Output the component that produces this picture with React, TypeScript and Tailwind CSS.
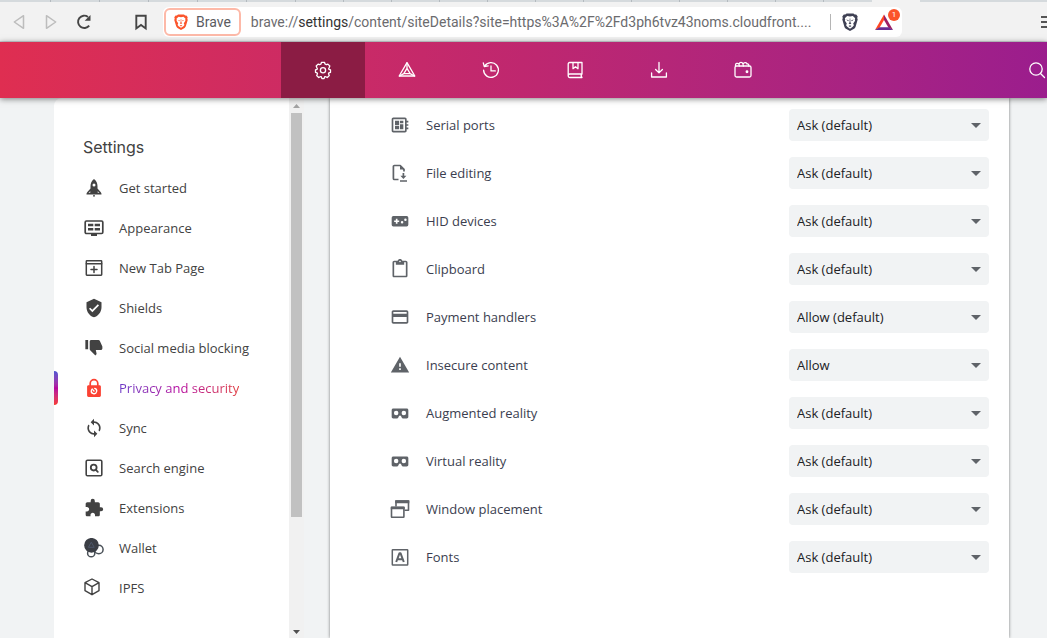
import React, { ReactNode } from "react";
import {
  MdContentPaste,
  MdDeveloperBoard,
  MdExtension,
  MdPayment,
  MdSync,
  MdVerifiedUser,
  MdWarning,
} from "react-icons/md";

type IconProps = { children: ReactNode; className?: string };

function Solid({ children, className = "size-5" }: IconProps) {
  return (
    <svg viewBox="0 0 24 24" className={className} fill="currentColor" aria-hidden="true">
      {children}
    </svg>
  );
}

function Line({ children, className = "size-5" }: IconProps) {
  return (
    <svg
      viewBox="0 0 20 20"
      className={className}
      fill="none"
      stroke="currentColor"
      strokeWidth="1.5"
      strokeLinejoin="round"
      strokeLinecap="round"
      aria-hidden="true"
    >
      {children}
    </svg>
  );
}

function Lion({ className }: { className: string }) {
  return (
    <svg viewBox="0 0 16 18" className={className} aria-hidden="true">
      <path
        fill="currentColor"
        d="M4.600.4h6.800l1.300 1.200 1.500-.1 1.500 2.100-.5 1.400.5 1.600-2.100 7.100c-.3 1-.8 1.600-1.500 2.100L8 18l-4.100-2.200c-.7-.5-1.200-1.100-1.500-2.100L.3 6.600.8 5 .3 3.600l1.500-2.100 1.500.1Z"
      />
      <path
        fill="white"
        d="M5.200 3 8 3.500 10.800 3l2.400 2.300-.4 1 .3 1.400-1.900 2.800.7 1.800-1.200 1.500L8 15.700l-2.700-1.900-1.200-1.500.7-1.800-1.900-2.800.3-1.400-.4-1Z"
      />
      <path
        fill="currentColor"
        d="m4.200 6.600 2.600.6-.6 1ZM11.800 6.600l-2.600.6.6 1ZM7.700 5.500h.6l.1 3.700 1 1.200L8 11.300l-1.400-.9 1-1.200ZM6.500 13 8 12.300l1.500.7L8 14Z"
      />
    </svg>
  );
}

const rocket = (
  <Line>
    <path
      fill="currentColor"
      stroke="none"
      fillRule="evenodd"
      d="M10 1C7.500 3 6.500 5.500 6.500 8.200v2.400L3.400 14c-.8.9-.9 1.500-.9 2.500h15c0-1-.1-1.600-.9-2.500l-3.100-3.400V8.200C13.500 5.500 12.500 3 10 1Zm0 4.600a1.500 1.500 0 1 1 0 3 1.500 1.500 0 0 1 0-3ZM6.300 13.200v1.600H4.500ZM13.700 13.200v1.600h1.800Z"
    />
    <path fill="currentColor" stroke="none" d="M9.200 17h1.600l-.2 1.700h-1.200Z" />
  </Line>
);

const appearance = (
  <Line>
    <rect x="1.200" y="3" width="17.600" height="12.500" rx="1.200" strokeWidth="1.700" />
    <path
      fill="currentColor"
      stroke="none"
      d="M7 16h6v2H7zM4 5.800h5.300v2.500H4zM10.700 5.800H16v2.500h-5.300zM4 10h5.300v2.500H4zM10.700 10H16v2.500h-5.300z"
    />
  </Line>
);

const newTab = (
  <Line>
    <rect x="2.300" y="2.800" width="15.400" height="14.400" rx=".6" />
    <path d="M2.300 5.800h15.400M10 8.500v6M7 11.500h6" />
  </Line>
);

const thumbDown = (
  <Solid>
    <path
      transform="translate(23 0) scale(-0.95 0.93)"
      d="M15 2.500H6c-.83 0-1.540.5-1.840 1.220L1.140 10.770c-.09.23-.14.47-.14.73v2c0 1.100.9 2 2 2h6.310l-.95 4.570-.03.320c0 .41.17.79.44 1.060l1.060 1.050 6.590-6.590c.36-.36.58-.86.58-1.410V4.500c0-1.100-.9-2-2-2zm4 0v12h3.500v-12H19z"
    />
  </Solid>
);

const lock = (
  <Line className="size-5 text-[#fb4233]">
    <path d="M6.200 8V5.500a3.800 3.800 0 0 1 7.600 0V8" strokeWidth="1.700" />
    <path
      fill="currentColor"
      stroke="none"
      d="M4.500 7.300h11c.8 0 1.400.6 1.400 1.400v8.900c0 .8-.6 1.400-1.400 1.400h-11c-.8 0-1.400-.6-1.400-1.400V8.700c0-.8.6-1.400 1.400-1.400Z"
    />
    <circle cx="10" cy="13" r="2.700" stroke="white" strokeWidth="1.300" strokeDasharray="14 3" transform="rotate(-75 10 13)" />
    <path d="m10 13-1.300-1.400" stroke="white" strokeWidth="1.300" />
  </Line>
);

const searchEngine = (
  <Line>
    <rect x="2.200" y="2.200" width="15.600" height="15.600" rx="1.300" strokeWidth="1.600" />
    <circle cx="9.700" cy="9.600" r="2.900" strokeWidth="1.800" />
    <path d="m11.900 11.900 1.900 1.900" strokeWidth="1.800" />
  </Line>
);

const walletTokens = (
  <Line>
    <circle cx="14.800" cy="11.500" r="4.300" stroke="#495057" />
    <circle cx="7.200" cy="15.200" r="3.600" stroke="#495057" />
    <circle cx="7.500" cy="7.300" r="6.600" fill="#3b3e45" stroke="#3b3e45" />
    <path d="m7.500 4.500 2.700 4.800H4.800Z" stroke="#4d5669" strokeWidth="1" />
  </Line>
);

const cube = (
  <Line>
    <path d="m8 1 7 3.700v8l-7 4-7-4v-8zM1 4.700l7 4 7-4M8 8.700v8" strokeWidth="1.400" />
  </Line>
);

const navigation: { label: string; icon: ReactNode; active?: boolean }[] = [
  { label: "Get started", icon: rocket },
  { label: "Appearance", icon: appearance },
  { label: "New Tab Page", icon: newTab },
  { label: "Shields", icon: <MdVerifiedUser className="size-5" /> },
  { label: "Social media blocking", icon: thumbDown },
  { label: "Privacy and security", icon: lock, active: true },
  { label: "Sync", icon: <MdSync className="size-5" /> },
  { label: "Search engine", icon: searchEngine },
  { label: "Extensions", icon: <MdExtension className="size-5" /> },
  { label: "Wallet", icon: walletTokens },
  { label: "IPFS", icon: cube },
];

const fileEditing = (
  <Line>
    <path d="M8.500 16.500H4.400a1 1 0 0 1-1-1v-12a1 1 0 0 1 1-1h5.800L14 6.300v2.200" strokeWidth="1.700" strokeLinecap="butt" />
    <path d="M10 2.500v4h4z" fill="currentColor" stroke="none" />
    <path d="M13.400 10v3" strokeWidth="1.700" strokeLinecap="butt" />
    <path d="M10.400 12.800h6l-3 3.200zM10 17.200h7v1.500h-7z" fill="currentColor" stroke="none" />
  </Line>
);

const hid = (
  <Solid>
    <path
      fillRule="evenodd"
      d="M4 6h16a2 2 0 0 1 2 2v8.500a2 2 0 0 1-2 2H4a2 2 0 0 1-2-2V8a2 2 0 0 1 2-2Zm3 3.300v2H5v2h2v2h2v-2h2v-2H9v-2Zm7.500 2.700a1.500 1.500 0 1 0 0 3 1.500 1.500 0 0 0 0-3Zm4-3a1.500 1.500 0 1 0 0 3 1.500 1.500 0 0 0 0-3Z"
    />
  </Solid>
);

const goggles = (
  <Solid>
    <path
      fillRule="evenodd"
      d="M4 6.500h16c1.200 0 2 .8 2 2v8c0 1.200-.8 2-2 2h-4.300c-.8 0-1.400-.4-1.700-1.100l-.8-1.700c-.5-1-1.900-1-2.400 0l-.8 1.700c-.3.7-.9 1.100-1.700 1.100H4c-1.200 0-2-.8-2-2v-8c0-1.200.8-2 2-2Zm3.400 2.700a2.700 2.700 0 1 0 0 5.400 2.700 2.700 0 0 0 0-5.400Zm9.200 0a2.700 2.700 0 1 0 0 5.400 2.700 2.700 0 0 0 0-5.400Z"
    />
  </Solid>
);

const windows = (
  <Line>
    <path d="M6 7V2h12.500v9.300H15" strokeWidth="1.600" />
    <path d="M5.200 1.200h14.100v3H5.200zM.8 7.700h13.900v2.500H.8z" fill="currentColor" stroke="none" />
    <rect x="1.500" y="8.400" width="12.400" height="9.800" rx=".4" strokeWidth="1.600" />
  </Line>
);

const fonts = (
  <Line>
    <rect x="2.300" y="2.800" width="15.400" height="15.200" rx=".5" />
    <path d="M6.200 15 9.500 6.200h1L13.800 15M7.600 12.200h4.800" strokeWidth="2" strokeLinecap="butt" />
  </Line>
);

const permissions: { label: string; icon: ReactNode; value: string }[] = [
  { label: "Serial ports", icon: <MdDeveloperBoard className="size-5" />, value: "Ask (default)" },
  { label: "File editing", icon: fileEditing, value: "Ask (default)" },
  { label: "HID devices", icon: hid, value: "Ask (default)" },
  { label: "Clipboard", icon: <MdContentPaste className="size-5" />, value: "Ask (default)" },
  { label: "Payment handlers", icon: <MdPayment className="size-5" />, value: "Allow (default)" },
  { label: "Insecure content", icon: <MdWarning className="size-5" />, value: "Allow" },
  { label: "Augmented reality", icon: goggles, value: "Ask (default)" },
  { label: "Virtual reality", icon: goggles, value: "Ask (default)" },
  { label: "Window placement", icon: windows, value: "Ask (default)" },
  { label: "Fonts", icon: fonts, value: "Ask (default)" },
];

const sections: { label: string; icon: ReactNode; active?: boolean }[] = [
  {
    label: "Settings",
    active: true,
    icon: (
      <>
        <path d="M8.100 3.900 8.400 2.400h3.200l.3 1.500 1.500.8 1.500-.6 1.900 1.900-.7 1.800c-.6.9-.6 1.200 0 1.500l1.400.5v2.500l-1.500.5c-.6.4-.6 1-.2 1.600l.5 1.200-2 1.900-1.400-.7c-.8-.4-1.300-.1-1.500.6l-.3 1.200H8.900l-.3-1.200c-.2-.7-.7-1-1.500-.6l-1.400.7-2-1.900.5-1.200c.4-.6.4-1.200-.2-1.600l-1.500-.5V9.800l1.400-.5c.6-.3.600-.6 0-1.500l-.7-1.800 1.900-1.900 1.500.6Z" />
        <circle cx="10" cy="10.200" r="2.600" />
      </>
    ),
  },
  {
    label: "Rewards",
    icon: (
      <>
        <path d="M10 2.700 17.800 16H2.200Z" />
        <path d="m10 8.300 3.200 5.300H6.800ZM10 3v5.300M2.500 16l4.300-2.400M17.500 16l-4.300-2.400" />
      </>
    ),
  },
  {
    label: "History",
    icon: <path d="M3.600 6.300a7.400 7.400 0 1 1-1 3.800M2.300 2.800l1 3.800 3.900-.8M10 5.900v5h4.300" />,
  },
  {
    label: "Bookmarks",
    icon: (
      <path d="M17 14V2.500H4.700c-.9 0-1.500.7-1.500 1.500v12c0 .9.700 1.500 1.500 1.500H17M17 14H4.700c-1 0-1.500.7-1.500 1.700M17 14c-1 1-1 2.500 0 3.500M8 2.500v6.200l2.500-2 2.500 2V2.500" />
    ),
  },
  {
    label: "Downloads",
    icon: <path d="M10 2.500v10M6.600 9.500l3.400 3.400 3.400-3.400M2.600 13v4h14.800v-4" />,
  },
  {
    label: "Wallet",
    icon: (
      <>
        <rect x="2" y="6" width="16" height="11" rx="1.500" />
        <path d="M2.500 6V5c0-1.500 2-2.300 3.500-1 .7-2.300 3.300-2.300 4 0 1-2 3.800-1.600 4 0 1-.5 2 .5 1.800 2M6 4l.3 2M10 4l.3 2" />
        <circle cx="14" cy="11.700" r=".8" fill="currentColor" />
      </>
    ),
  },
];

const tabWidths = ["w-[51px]", ...Array(5).fill("w-[49px]"), ...Array(11).fill("w-12")];

function TabStrip() {
  return (
    <div className="flex h-0.5 shrink-0 overflow-hidden bg-[#d5dadd]" aria-hidden="true">
      {tabWidths.map((width, i) => (
        <span key={i} className={`${width} shrink-0 border-r border-[#b4babf]`} />
      ))}
      <span className="w-12 shrink-0" />
      <span className="w-12 shrink-0 bg-[#f2f2f2]" />
    </div>
  );
}

function Toolbar() {
  return (
    <div className="flex h-10 shrink-0 items-center overflow-hidden border-b border-[#d2d5d8] bg-[#f2f2f2] font-[Roboto,sans-serif] text-[#454545]">
      <div className="flex w-[163px] shrink-0 items-center pl-3">
        <button aria-label="Back" className="mr-3 text-[#bdbdbd]">
          <Line>
            <path d="M11.500 3.700v12.600L2.300 10Z" />
          </Line>
        </button>
        <button aria-label="Forward" className="mr-3 text-[#bdbdbd]">
          <Line>
            <path d="M2.500 3.700v12.600l9.200-6.300Z" />
          </Line>
        </button>
        <button aria-label="Reload" className="mr-auto">
          <Line>
            <path d="M13.200 13.600A6.200 6.200 0 1 1 12 4.900" strokeWidth="1.900" strokeLinecap="butt" />
            <path d="M8.700 8.700h5.800V3Z" fill="currentColor" stroke="none" />
          </Line>
        </button>
        <button aria-label="Bookmark this page" className="mr-3">
          <Line>
            <path d="M5.300 3.800h9.400v12.600L10 13l-4.700 3.400Z" strokeWidth="1.900" strokeLinejoin="miter" />
          </Line>
        </button>
      </div>
      <div className="flex h-[30px] min-w-0 flex-1 items-center rounded-md bg-white pl-px">
        <button className="flex h-7 shrink-0 items-center gap-2 rounded-md border-2 border-[#fdb9a8] px-2 text-sm text-[#5b5b5f]">
          <Lion className="h-4 w-3.5 text-[#fb542b]" />
          <span>Brave</span>
        </button>
        <div className="ml-2.5 min-w-0 flex-1 text-sm whitespace-nowrap text-[#6b6b6e]">
          brave://<span className="text-[#333]">settings</span>
          /content/siteDetails?site=https%3A%2F%2Fd3ph6tvz43noms.cloudfront....
        </div>
        <span className="mr-[11px] h-4 w-px bg-[#b5b5b5]" />
        <button aria-label="Brave Shields">
          <Lion className="h-[18px] w-4 text-[#3f4154]" />
        </button>
        <button aria-label="Brave Rewards" className="relative mr-2 ml-4">
          <svg viewBox="0 0 20 18" className="h-[18px] w-5" aria-hidden="true">
            <path d="M10 1.500 1 17l4.500-2.300L10 7Z" fill="#ff4724" />
            <path d="m10 1.500 9 15.500-4.500-2.300L10 7Z" fill="#9e1f63" />
            <path d="M1 17h18l-4.500-2.800h-9Z" fill="#662d91" />
          </svg>
          <span className="absolute -top-1 -right-1.5 flex size-3 items-center justify-center rounded-full bg-[#fb542b] text-[8px] text-white">
            1
          </span>
        </button>
      </div>
      <button aria-label="Menu" className="ml-[139px] flex w-1.5 shrink-0 flex-col gap-[3px] overflow-hidden">
        <span className="h-0.5 w-3.5 bg-[#555]" />
        <span className="h-0.5 w-3.5 bg-[#555]" />
        <span className="h-0.5 w-3.5 bg-[#555]" />
      </button>
    </div>
  );
}

function SectionBar() {
  return (
    <header className="z-10 flex h-14 shrink-0 items-stretch bg-linear-to-r from-[#df2e51] via-[#bf276f] to-[#9b1d8d] pl-[281px] text-white shadow-[0_1px_6px_rgba(0,0,0,0.5)]">
      <nav className="flex">
        {sections.map((section) => (
          <a
            key={section.label}
            href="#"
            aria-label={section.label}
            className={`flex w-21 items-center justify-center ${section.active ? "bg-[#8b1c44]" : ""}`}
          >
            <Line>
              <g strokeWidth="1.300">{section.icon}</g>
            </Line>
          </a>
        ))}
      </nav>
      <button aria-label="Search settings" className="ml-auto">
        <Line>
          <circle cx="9" cy="9" r="6.200" strokeWidth="1.300" />
          <path d="m13.500 13.500 4 4" strokeWidth="1.300" />
        </Line>
      </button>
    </header>
  );
}

function Sidebar() {
  return (
    <aside className="w-[235px] shrink-0 rounded-tl-lg bg-white pt-9 text-[#424242]">
      <h1 className="pl-[29px] font-[Inter,sans-serif] text-base leading-[26px]">Settings</h1>
      <nav className="mt-2 flex flex-col">
        {navigation.map((item) => (
          <a key={item.label} href="#" className="flex h-10 items-center text-[13px]">
            <span
              className={`h-[34px] w-1 rounded-r-sm ${
                item.active ? "bg-linear-to-b from-[#4c54d2] via-[#b5009f] to-[#f73a2c]" : ""
              }`}
            />
            <span className="mr-[15px] ml-[26px]">{item.icon}</span>
            <span
              className={`pt-0.5 ${
                item.active
                  ? "bg-linear-to-r from-[#6b39c8] via-[#b5009f] to-[#e03a3c] bg-clip-text font-medium text-transparent"
                  : ""
              }`}
            >
              {item.label}
            </span>
          </a>
        ))}
      </nav>
    </aside>
  );
}

function ScrollTrack() {
  return (
    <div className="flex w-[15px] shrink-0 flex-col items-center bg-[#f1f1f1]" aria-hidden="true">
      <div className="flex h-[15px] items-center">
        <svg viewBox="0 0 7 4" className="h-1 w-[7px]" fill="#a3a3a3">
          <path d="M0 4h7L3.500 0Z" />
        </svg>
      </div>
      <div className="flex w-[11px] flex-1 flex-col">
        <div className="h-[79%] bg-[#c1c1c1]" />
      </div>
      <div className="flex h-[13px] items-center">
        <svg viewBox="0 0 7 4" className="h-1 w-[7px]" fill="#505050">
          <path d="M0 0h7L3.500 4Z" />
        </svg>
      </div>
    </div>
  );
}

function PermissionRow({ label, icon, value }: { label: string; icon: ReactNode; value: string }) {
  const id = label.toLowerCase().replace(/ /g, "-");
  return (
    <div className="flex h-12 items-center gap-4">
      <span className="text-[#5f6368]">{icon}</span>
      <label htmlFor={id} className="flex-1 pt-0.5 text-[13px] text-[#3b3e4f]">
        {label}
      </label>
      <div className="grid w-[200px] items-center">
        <select
          id={id}
          defaultValue={value}
          className="col-start-1 row-start-1 h-8 w-full appearance-none rounded bg-[#f1f3f4] px-2 pt-0.5 text-[13px] text-[#202124]"
        >
          <option>{value}</option>
          <option>Block</option>
        </select>
        <svg
          viewBox="0 0 10 5"
          className="pointer-events-none col-start-1 row-start-1 mr-2 h-[5px] w-2.5 justify-self-end"
          fill="#5f6368"
          aria-hidden="true"
        >
          <path d="M0 0h10L5 5Z" />
        </svg>
      </div>
    </div>
  );
}

export default function App() {
  return (
    <div className="flex h-screen flex-col overflow-hidden bg-[#f1f3f4] font-['Open_Sans',sans-serif]">
      <TabStrip />
      <Toolbar />
      <SectionBar />
      <div className="flex min-h-0 flex-1 pl-[54px]">
        <Sidebar />
        <ScrollTrack />
        <main className="mr-[38px] ml-[26px] flex-1 bg-white pt-[3px] pr-5 pl-[60px] shadow-[0_0_3px_rgba(0,0,0,0.5)]">
          {permissions.map((permission) => (
            <PermissionRow key={permission.label} {...permission} />
          ))}
        </main>
      </div>
    </div>
  );
}
